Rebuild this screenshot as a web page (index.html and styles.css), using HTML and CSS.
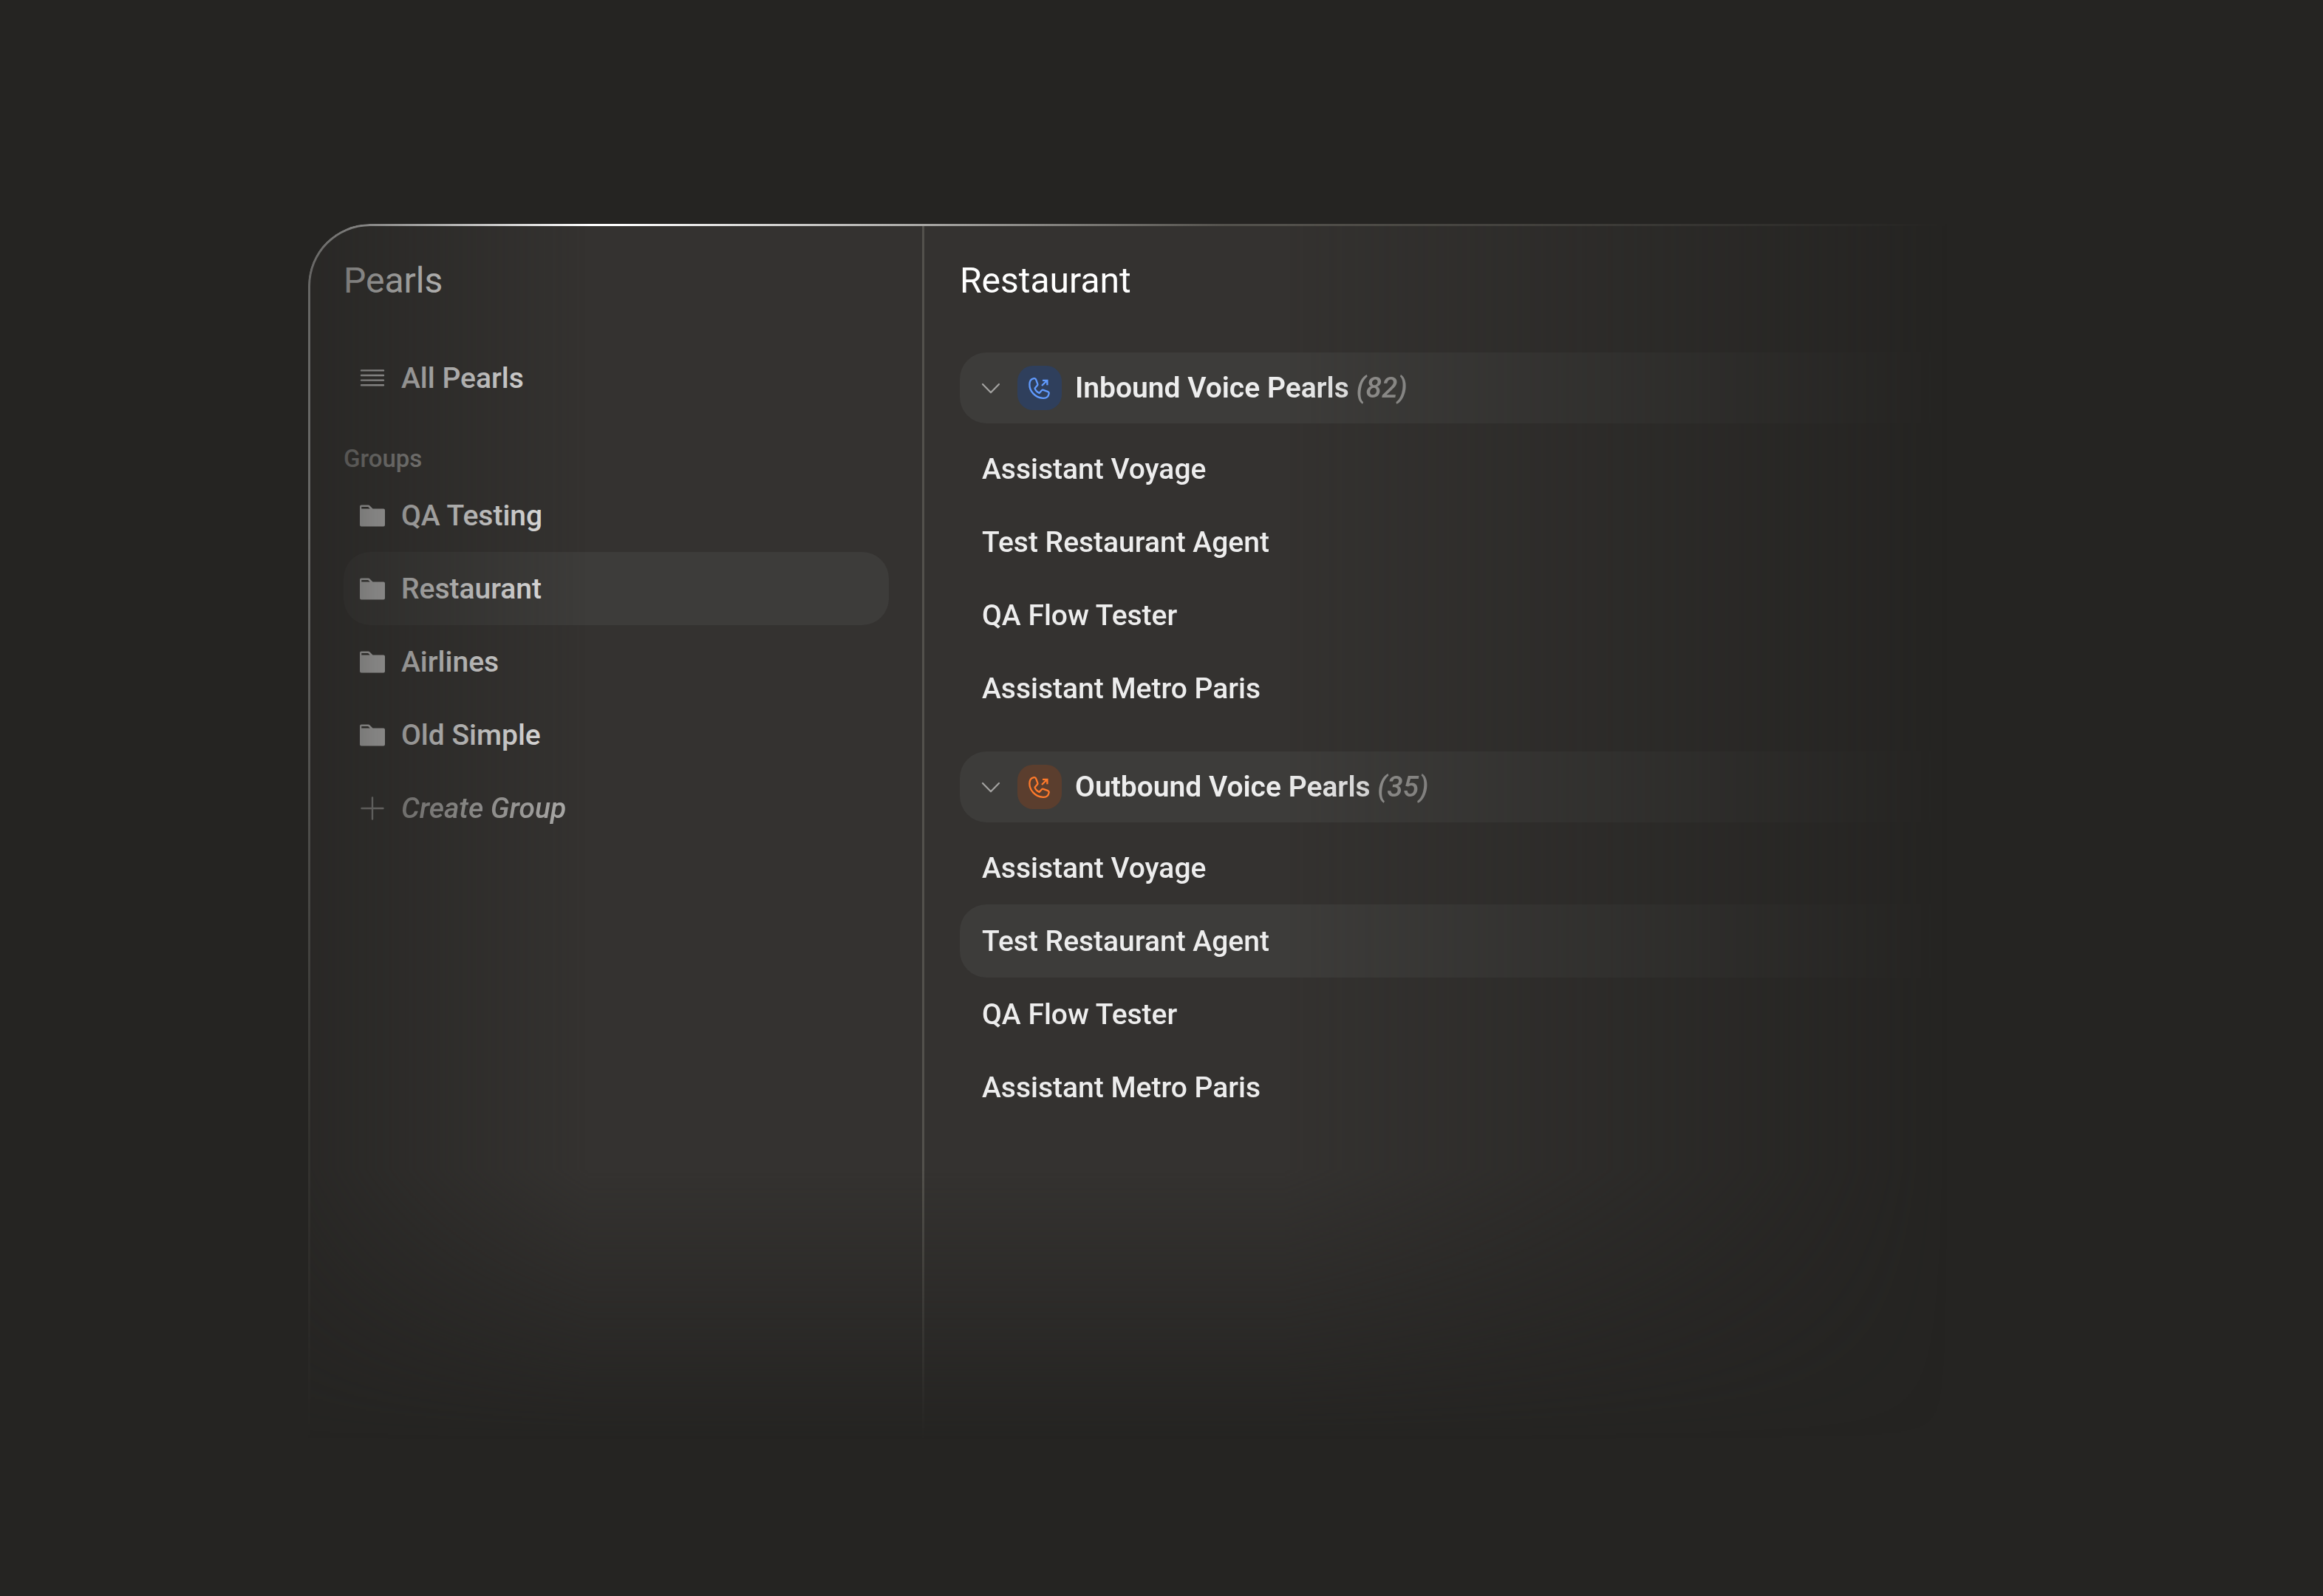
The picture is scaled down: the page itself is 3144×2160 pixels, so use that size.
FILE: index.html
```
<!DOCTYPE html>
<html lang="en">

<head>
    <meta charset="UTF-8">
    <meta name="viewport" content="width=device-width, initial-scale=1.0">
    <title>Pearls</title>
    <link rel="stylesheet" href="styles.css">
</head>

<body>
    <!-- Shared icons -->
    <svg class="sprite" width="0" height="0">
        <symbol id="icon-list" viewBox="0 0 36 36">
            <path d="M3 7.4h30M3 14h30M3 20.6h30M3 27.2h30" fill="none" stroke="currentColor" stroke-width="2.4" stroke-linecap="round" />
        </symbol>
        <symbol id="icon-folder" viewBox="0 0 36 36">
            <path fill="currentColor" fill-rule="evenodd" d="M3 3.500h9.600c.7 0 1.200.2 1.700.7l4.200 4.300H33a2 2 0 0 1 2 2v20a2 2 0 0 1-2 2H3a2 2 0 0 1-2-2v-25a2 2 0 0 1 2-2zM3.300 6.100v2.400h11.400l-1.900-2a1 1 0 0 0-.7-.4z" />
        </symbol>
        <symbol id="icon-plus" viewBox="0 0 36 36">
            <path d="M18 3.5v29M3.5 18h29" fill="none" stroke="currentColor" stroke-width="2.4" stroke-linecap="round" />
        </symbol>
        <symbol id="icon-chevron" viewBox="0 0 36 36">
            <path d="M7 13l11 11.3L29 13" fill="none" stroke="currentColor" stroke-width="2.2" stroke-linecap="round" stroke-linejoin="round" />
        </symbol>
        <symbol id="icon-call" viewBox="0 0 60 60">
            <g fill="none" stroke="currentColor" stroke-width="2.3" stroke-linecap="round" stroke-linejoin="round">
                <path d="M20.8 17.600L22.500 17.200Q24.600 16.900 25.200 18.900L27.300 24.600Q27.700 25.700 27 26.600L23.600 30.600Q24.800 34.600 29.600 37.100L33 33.300Q33.800 32.400 35 32.800L41.400 35.200Q43.100 36 42.600 37.900C41.800 42.400 38.500 44.200 34.400 43.800C24 43.200 16 34.200 16.400 25C16.600 20.800 17.600 18.400 20.800 17.600Z" />
                <path d="M33 27l7.300-7.200M34 19.900h6.400v6.400" stroke-linecap="butt" stroke-linejoin="miter" />
            </g>
        </symbol>
    </svg>

    <div class="window">
        <aside class="sidebar">
            <h2>Pearls</h2>
            <ul class="menu">
                <li><svg class="icon"><use href="#icon-list" /></svg>All Pearls</li>
            </ul>
            <div class="label">Groups</div>
            <ul class="menu">
                <li><svg class="icon"><use href="#icon-folder" /></svg>QA Testing</li>
                <li class="active"><svg class="icon"><use href="#icon-folder" /></svg>Restaurant</li>
                <li><svg class="icon"><use href="#icon-folder" /></svg>Airlines</li>
                <li><svg class="icon"><use href="#icon-folder" /></svg>Old Simple</li>
                <li class="create"><svg class="icon"><use href="#icon-plus" /></svg>Create Group</li>
            </ul>
        </aside>

        <main class="content">
            <h2>Restaurant</h2>
            <section>
                <div class="section-header">
                    <svg class="chevron"><use href="#icon-chevron" /></svg>
                    <svg class="badge inbound"><use href="#icon-call" /></svg>
                    <div class="title">Inbound Voice Pearls <em>(82)</em></div>
                </div>
                <ul class="pearls">
                    <li>Assistant Voyage</li>
                    <li>Test Restaurant Agent</li>
                    <li>QA Flow Tester</li>
                    <li>Assistant Metro Paris</li>
                </ul>
            </section>
            <section>
                <div class="section-header">
                    <svg class="chevron"><use href="#icon-chevron" /></svg>
                    <svg class="badge outbound"><use href="#icon-call" /></svg>
                    <div class="title">Outbound Voice Pearls <em>(35)</em></div>
                </div>
                <ul class="pearls">
                    <li>Assistant Voyage</li>
                    <li class="active">Test Restaurant Agent</li>
                    <li>QA Flow Tester</li>
                    <li>Assistant Metro Paris</li>
                </ul>
            </section>
        </main>
    </div>
</body>

</html>
```
FILE: styles.css
```
* {
    box-sizing: border-box;
}

body {
    margin: 0;
    padding: 303px 0 0 417px;
    height: 2160px;
    overflow: hidden;
    font-family: Roboto, sans-serif;
    font-size: 39px;
    font-weight: 500;
    line-height: 48px;
    color: #ededed;
    background: #252422;
}

.sprite {
    position: absolute;
}

/* The whole window fades out to the left, right and bottom */
.window {
    position: relative;
    display: flex;
    width: 2260px;
    height: 1660px;
    padding: 3px 0 0 3px;
    border-radius: 84px 0 0 0;
    background: #343230;
    -webkit-mask-image: linear-gradient(to right, rgba(0, 0, 0, 0.3), #000 380px, #000 1320px, transparent 2220px), linear-gradient(to bottom, #000 1280px, transparent 1645px);
    -webkit-mask-composite: source-in;
    mask-image: linear-gradient(to right, rgba(0, 0, 0, 0.3), #000 380px, #000 1320px, transparent 2220px), linear-gradient(to bottom, #000 1280px, transparent 1645px);
    mask-composite: intersect;
}

/* Shiny edge, only on the top and left sides */
.window::before {
    content: "";
    position: absolute;
    inset: 0;
    border-radius: 84px 0 0 0;
    padding: 3px 0 0 3px;
    background: radial-gradient(circle at 0 0, #fff 420px, #53514c 1240px);
    -webkit-mask: linear-gradient(#000 0 0) content-box, linear-gradient(#000 0 0);
    -webkit-mask-composite: xor;
    mask: linear-gradient(#000 0 0) content-box exclude, linear-gradient(#000 0 0);
}

h2 {
    margin: 0;
    font-size: 48px;
    font-weight: 400;
    line-height: 60px;
    color: #fff;
}

ul {
    margin: 0;
    padding: 0;
    list-style: none;
}

.sidebar {
    width: 831px;
    padding: 44px 45px 0 45px;
    border-right: 3px solid #53514c;
}

.sidebar h2 {
    margin-bottom: 52px;
}

.menu li {
    display: flex;
    align-items: center;
    gap: 21px;
    height: 99px;
    padding: 0 21px;
    border-radius: 36px;
}

.icon {
    width: 36px;
    height: 36px;
}

.menu .active,
.pearls .active,
.section-header {
    background: #3d3c3a;
}

.label {
    margin: 40px 0 7px;
    font-size: 33px;
    line-height: 40px;
    color: #a3a2a0;
}

.create {
    font-style: italic;
    color: #b0afad;
}

.create .icon {
    color: #a3a2a0;
}

.content {
    flex: 1;
    padding: 44px 0 0 48px;
}

.content h2 {
    margin-bottom: 67px;
}

section {
    margin-bottom: 36px;
}

.section-header {
    display: flex;
    align-items: center;
    gap: 18px;
    height: 96px;
    margin-bottom: 12px;
    padding: 0 24px;
    border-radius: 36px;
}

.chevron {
    width: 36px;
    height: 36px;
    color: #a3a2a0;
}

.badge {
    width: 60px;
    height: 60px;
    border-radius: 21px;
}

.inbound {
    color: #619bff;
    background: #2f3f5c;
}

.outbound {
    color: #ff7a2b;
    background: #5b3e2e;
}

.title {
    font-weight: 600;
}

.title em {
    color: #9b9a98;
    font-weight: 500;
}

.pearls li {
    display: flex;
    align-items: center;
    height: 99px;
    padding: 0 30px;
    border-radius: 36px;
}
```
